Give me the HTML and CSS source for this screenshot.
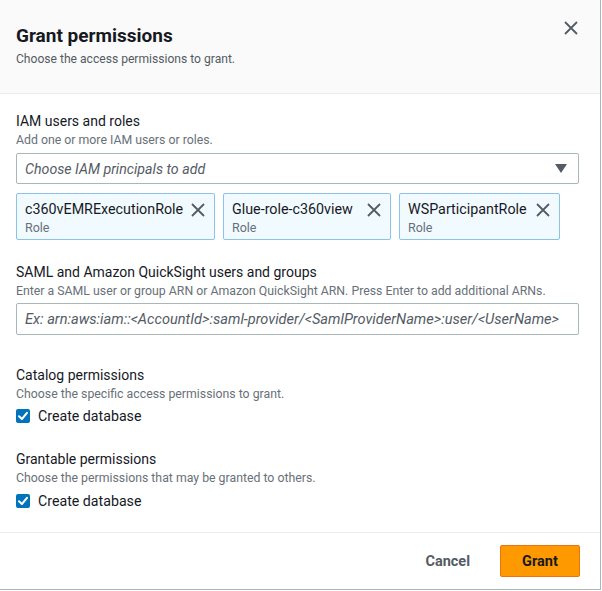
FILE: index.html
```html
<!DOCTYPE html>
<html lang="en">
<head>
<meta charset="utf-8">
<title>Grant permissions</title>
<link rel="stylesheet" href="styles.css">
</head>
<body>
<div class="modal">
  <header class="modal-header">
    <div class="header-text">
      <h1 class="title">Grant permissions</h1>
      <p class="subtitle">Choose the access permissions to grant.</p>
    </div>
    <button class="close" aria-label="Close">
      <svg width="16" height="16" viewBox="0 0 16 16"><path d="M2 2L14 14M14 2L2 14" stroke="#545b64" stroke-width="1.8" fill="none"/></svg>
    </button>
  </header>

  <main class="modal-body">
    <section class="field field-iam">
      <div class="label">IAM users and roles</div>
      <div class="desc">Add one or more IAM users or roles.</div>
      <div class="select">
        <span class="placeholder">Choose IAM principals to add</span>
        <svg class="caret" width="12" height="9" viewBox="0 0 12 9"><path d="M0 0H12L6 9Z" fill="#545b64"/></svg>
      </div>
      <div class="tokens">
        <div class="token t1">
          <div class="token-text"><div class="token-name">c360vEMRExecutionRole</div><div class="token-sub">Role</div></div>
          <svg class="token-x" width="16" height="16" viewBox="0 0 16 16"><path d="M2 2L14 14M14 2L2 14" stroke="#545b64" stroke-width="1.8" fill="none"/></svg>
        </div>
        <div class="token t2">
          <div class="token-text"><div class="token-name">Glue-role-c360view</div><div class="token-sub">Role</div></div>
          <svg class="token-x" width="16" height="16" viewBox="0 0 16 16"><path d="M2 2L14 14M14 2L2 14" stroke="#545b64" stroke-width="1.8" fill="none"/></svg>
        </div>
        <div class="token t3">
          <div class="token-text"><div class="token-name">WSParticipantRole</div><div class="token-sub">Role</div></div>
          <svg class="token-x" width="16" height="16" viewBox="0 0 16 16"><path d="M2 2L14 14M14 2L2 14" stroke="#545b64" stroke-width="1.8" fill="none"/></svg>
        </div>
      </div>
    </section>

    <section class="field field-saml">
      <div class="label">SAML and Amazon QuickSight users and groups</div>
      <div class="desc">Enter a SAML user or group ARN or Amazon QuickSight ARN. Press Enter to add additional ARNs.</div>
      <div class="input"><span class="placeholder placeholder-arn">Ex: arn:aws:iam::&lt;AccountId&gt;:saml-provider/&lt;SamlProviderName&gt;:user/&lt;UserName&gt;</span></div>
    </section>

    <section class="field field-catalog">
      <div class="label">Catalog permissions</div>
      <div class="desc">Choose the specific access permissions to grant.</div>
      <label class="check">
        <span class="box"><svg width="14" height="14" viewBox="0 0 14 14"><path d="M3 7.2L5.9 10L11 3.8" stroke="#fff" stroke-width="2" fill="none" stroke-linecap="round" stroke-linejoin="round"/></svg></span>
        <span class="check-label">Create database</span>
      </label>
    </section>

    <section class="field field-grantable">
      <div class="label">Grantable permissions</div>
      <div class="desc">Choose the permissions that may be granted to others.</div>
      <label class="check">
        <span class="box"><svg width="14" height="14" viewBox="0 0 14 14"><path d="M3 7.2L5.9 10L11 3.8" stroke="#fff" stroke-width="2" fill="none" stroke-linecap="round" stroke-linejoin="round"/></svg></span>
        <span class="check-label">Create database</span>
      </label>
    </section>
  </main>

  <footer class="modal-footer">
    <button class="btn btn-link">Cancel</button>
    <button class="btn btn-primary">Grant</button>
  </footer>
</div>
</body>
</html>
```
FILE: styles.css
```css
* { box-sizing: border-box; }
html, body { margin: 0; padding: 0; background: #fff; }
body {
  font-family: Roboto, "Liberation Sans", Arial, sans-serif;
  color: #16191f;
}
.modal {
  width: 601px;
  height: 590px;
  border-right: 1px solid #aab7b8;
  border-bottom: 1px solid #aab7b8;
  display: flex;
  flex-direction: column;
  background: #fff;
}
.modal-header {
  height: 94px;
  background: #fafafa;
  border-bottom: 1px solid #eaeded;
  padding: 25px 16px 0 16px;
  display: flex;
  justify-content: space-between;
  align-items: flex-start;
}
.title {
  margin: 0;
  font-size: 19px;
  line-height: 22px;
  font-weight: 700;
  color: #16191f;
}
.subtitle {
  margin: 3px 0 0 0;
  font-size: 12.1px;
  line-height: 18px;
  color: #545b64;
}
.close {
  border: 0;
  background: none;
  padding: 0;
  margin: -5px 5px 0 0;
  width: 16px;
  height: 16px;
  display: flex;
}
.modal-body {
  flex: 1;
  padding: 17px 21px 0 16px;
  display: flex;
  flex-direction: column;
}
.label {
  font-size: 14px;
  line-height: 20px;
  color: #16191f;
}
.desc {
  font-size: 12.3px;
  line-height: 18px;
  color: #687078;
}
.select, .input {
  margin-top: 4px;
  height: 31px;
  border: 1px solid #aab7b8;
  border-radius: 2px;
  display: flex;
  align-items: center;
  padding: 0 10px 0 8px;
  justify-content: space-between;
}
.input { margin-top: 3px; height: 32px; }
.placeholder {
  font-style: italic;
  font-size: 14.2px;
  color: #545b64;
  white-space: nowrap;
}
.placeholder-arn { font-size: 14.6px; }
.caret { margin-right: 1px; }
.tokens {
  margin-top: 9px;
  display: flex;
  gap: 8px;
}
.token {
  height: 47px;
  background: #f1faff;
  border: 1px solid #8cc4e8;
  border-radius: 2px;
  display: flex;
  justify-content: space-between;
  align-items: flex-start;
  padding: 6px 8px 0 8px;
}
.t1 { width: 199px; }
.t2 { width: 168px; }
.t3 { width: 161px; }
.token-name { font-size: 14.3px; line-height: 18px; color: #16191f; white-space: nowrap; }
.token-sub { font-size: 12.5px; line-height: 18px; color: #687078; margin-top: 1px; }
.token-x { margin-top: 2px; }
.field-saml { margin-top: 22px; }
.field-catalog { margin-top: 30px; }
.field-grantable { margin-top: 23px; }
.check {
  margin-top: 3px;
  display: flex;
  align-items: center;
  height: 20px;
  gap: 8px;
}
.field-grantable .check { margin-top: 4px; }
.box {
  width: 14px;
  height: 14px;
  border-radius: 2px;
  background: #0073bb;
  display: flex;
}
.check-label { font-size: 14.2px; color: #16191f; }
.modal-footer {
  height: 57px;
  border-top: 1px solid #eaeded;
  display: flex;
  justify-content: flex-end;
  align-items: flex-start;
  padding: 12px 20px 0 0;
  gap: 30px;
}
.btn {
  font-family: inherit;
  font-size: 14.5px;
  font-weight: 700;
  height: 32px;
  border-radius: 2px;
  border: 0;
  cursor: pointer;
}
.btn-link { background: none; color: #545b64; padding: 0; }
.btn-primary { background: #ff9900; color: #16191f; width: 80px; border: 1px solid #ec7211; }
```
